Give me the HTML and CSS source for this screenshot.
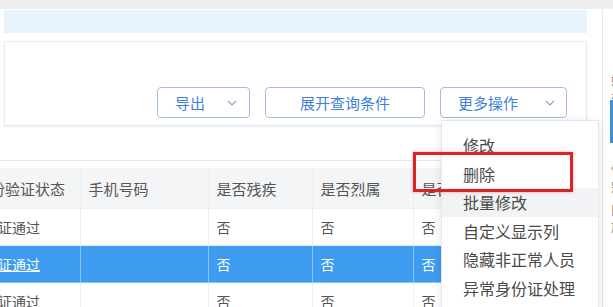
FILE: index.html
```html
<!DOCTYPE html>
<html lang="zh-CN">
<head>
    <meta charset="UTF-8">
    <meta name="viewport" content="width=device-width, initial-scale=1.0">
    <title>人员列表</title>
    <link rel="stylesheet" href="styles.css">
</head>
<body>
    <div class="topbar"></div>

    <div class="main">
        <div class="content">
            <div class="notice"></div>

            <div class="toolbar">
                <button class="btn">导出
                    <svg class="chevron" width="10" height="6" viewBox="0 0 10 6"><polyline points="1,1 5,5 9,1"/></svg>
                </button>
                <button class="btn btn-wide">展开查询条件</button>
                <div class="more">
                    <button class="btn btn-more">更多操作
                        <svg class="chevron" width="10" height="6" viewBox="0 0 10 6"><polyline points="1,1 5,5 9,1"/></svg>
                    </button>
                    <ul class="dropdown">
                        <li>修改</li>
                        <li>删除</li>
                        <li class="hover">批量修改</li>
                        <li>自定义显示列</li>
                        <li>隐藏非正常人员</li>
                        <li>异常身份证处理</li>
                    </ul>
                </div>
            </div>

            <div class="table-box">
                <table class="grid">
                    <colgroup>
                        <col class="c1"><col class="c2"><col class="c3"><col class="c4"><col class="c5"><col class="c6">
                    </colgroup>
                    <thead>
                        <tr>
                            <th>身份验证状态</th>
                            <th>手机号码</th>
                            <th>是否残疾</th>
                            <th>是否烈属</th>
                            <th>是否军人</th>
                            <th>备注</th>
                        </tr>
                    </thead>
                    <tbody>
                        <tr>
                            <td>验证通过</td><td></td><td>否</td><td>否</td><td>否</td><td></td>
                        </tr>
                        <tr class="selected">
                            <td><span class="link">验证通过</span></td><td></td><td>否</td><td>否</td><td>否</td><td></td>
                        </tr>
                        <tr>
                            <td>验证通过</td><td></td><td>否</td><td>否</td><td>否</td><td></td>
                        </tr>
                    </tbody>
                </table>
            </div>
        </div>

        <div class="side">
            <div class="side-line"></div>
            <div class="side-panel">
                <span class="side-text t1">姓名</span>
                <span class="side-tab"></span>
                <span class="side-text t2">性别</span>
                <span class="side-text t3">民族</span>
            </div>
        </div>
    </div>

    <div class="highlight"></div>
</body>
</html>
```

FILE: styles.css
```css
body {
    margin: 0;
    position: relative;
    width: 613px;
    height: 307px;
    overflow: hidden;
    background: #fff;
    font-family: "Noto Sans CJK SC", "Noto Sans", sans-serif;
    color: #555;
}
.topbar {
    height: 9px;
    background: #efefed;
}
.main {
    display: flex;
}
.content {
    width: 587px;
    flex-shrink: 0;
}
.notice {
    margin: 1px 0 0 4px;
    height: 23px;
    background: #e9f3fd;
}
.toolbar {
    margin: 8px 0 0 4px;
    height: 85px;
    box-sizing: border-box;
    border: 1px solid #e9eaec;
    padding: 45px 19px 0 0;
    display: flex;
    justify-content: flex-end;
    align-items: flex-start;
    gap: 15px;
    box-shadow: 0 1px 2px rgba(0, 0, 0, 0.07);
}
.btn {
    display: flex;
    align-items: center;
    height: 31px;
    padding: 0 12px 0 17px;
    border: 1px solid #9fbde6;
    border-radius: 4px;
    background: #fff;
    color: #3f7fd6;
    font-family: inherit;
    font-size: 15px;
    line-height: 1;
}
.btn .chevron {
    margin-left: 22px;
    fill: none;
    stroke: #87a4cf;
    stroke-width: 1.2;
}
.btn-wide {
    padding: 0 34px;
}
.btn-more {
    padding-right: 11px;
}
.btn-more .chevron {
    margin-left: 27px;
}
.more {
    position: relative;
}
.dropdown {
    position: absolute;
    top: 33px;
    left: 1px;
    width: 158px;
    box-sizing: border-box;
    margin: 0;
    padding: 10px 0;
    list-style: none;
    background: #fff;
    border: 1px solid #e4e7ed;
    box-shadow: 0 2px 10px rgba(0, 0, 0, 0.1);
    z-index: 2;
}
.dropdown li {
    height: 28.6px;
    line-height: 28.6px;
    padding-left: 21px;
    font-size: 16px;
    color: #4a4a4a;
    white-space: nowrap;
}
.dropdown li.hover {
    background: #f2f3f6;
}
.table-box {
    margin-top: 34px;
    border-top: 1px solid #e8e9ec;
    padding-top: 7px;
    overflow: hidden;
}
.grid {
    margin-left: -21px;
    border-collapse: collapse;
    table-layout: fixed;
    width: 644px;
    font-size: 14px;
}
.c1 { width: 101px; }
.c2 { width: 128px; }
.c3 { width: 104px; }
.c4 { width: 101px; }
.c5 { width: 110px; }
.c6 { width: 100px; }
.grid th,
.grid td {
    padding: 0 8px;
    text-align: left;
    white-space: nowrap;
    overflow: hidden;
    border-right: 1px solid #ebeef5;
    border-bottom: 1px solid #ebeef5;
}
.grid th {
    height: 40px;
    background: #f4f5f7;
    font-size: 15px;
    font-weight: normal;
    color: #555;
}
.grid th:first-child {
    padding-left: 0;
    text-indent: -4px;
}
.grid td:first-child {
    padding-left: 5px;
}
.grid td {
    height: 36px;
    color: #555;
}
.grid tr.selected td {
    background: #3d9bf0;
    color: #fff;
    border-color: #8cc3f5;
}
.link {
    text-decoration: underline;
}
.side {
    flex: 1;
    display: flex;
    padding-left: 15px;
}
.side-line {
    width: 1px;
    height: 298px;
    background: #f1e4e4;
}
.side-panel {
    flex: 1;
    position: relative;
    overflow: hidden;
}
.side-text {
    position: absolute;
    left: 8px;
    font-size: 12px;
    color: #777;
}
.t1 { top: 62px; }
.t2 { top: 152px; }
.t3 { top: 192px; }
.side-tab {
    position: absolute;
    left: 7px;
    top: 91px;
    width: 20px;
    height: 43px;
    background: #3d8fe0;
}
.highlight {
    position: absolute;
    left: 413px;
    top: 152px;
    width: 160px;
    height: 40px;
    box-sizing: border-box;
    border: 3px solid #d8232a;
    box-shadow: 0 0 3px rgba(200, 30, 30, 0.4);
    z-index: 3;
}
```
